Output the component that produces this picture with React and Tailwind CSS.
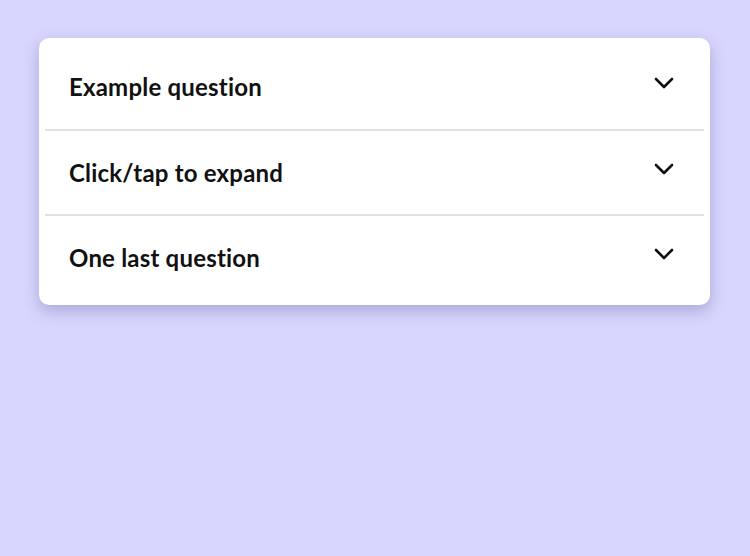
import { useState } from 'react';

const items = [
  { q: 'Example question', a: 'This is the answer to the example question.' },
  { q: 'Click/tap to expand', a: 'Each row opens to show its answer.' },
  { q: 'One last question', a: 'And here is the final answer.' },
];

function Chevron({ open }) {
  return (
    <svg
      width="20"
      height="12"
      viewBox="0 0 20 12"
      fill="none"
      stroke="#111"
      strokeWidth="2.6"
      strokeLinecap="round"
      strokeLinejoin="round"
      className={open ? 'rotate-180' : ''}
    >
      <path d="M2 2l8 8 8-8" />
    </svg>
  );
}

function App() {
  const [open, setOpen] = useState(null);

  return (
    <div className="min-h-screen bg-[#d8d6fe] pt-[38px] px-[39px] font-['Lato',sans-serif]">
      <div className="w-[671px] bg-white rounded-[10px] p-[6px] shadow-[0_6px_16px_rgba(70,60,130,0.3)]">
        {items.map((item, i) => (
          <div key={i} className={i > 0 ? 'border-t-2 border-[#e0e0e4]' : ''}>
            <button
              onClick={() => setOpen(open === i ? null : i)}
              className={`w-full flex items-center justify-between pl-6 pr-[30px] text-left ${i > 0 ? 'h-[83px]' : 'h-[85px]'}`}
            >
              <span className="text-[24px] font-bold text-[#111] tracking-[0.2px]">{item.q}</span>
              <span className="-mt-2">
                <Chevron open={open === i} />
              </span>
            </button>
            {open === i && <div className="px-6 pb-6 text-[16px] text-[#333]">{item.a}</div>}
          </div>
        ))}
      </div>
    </div>
  );
}

export default App;
